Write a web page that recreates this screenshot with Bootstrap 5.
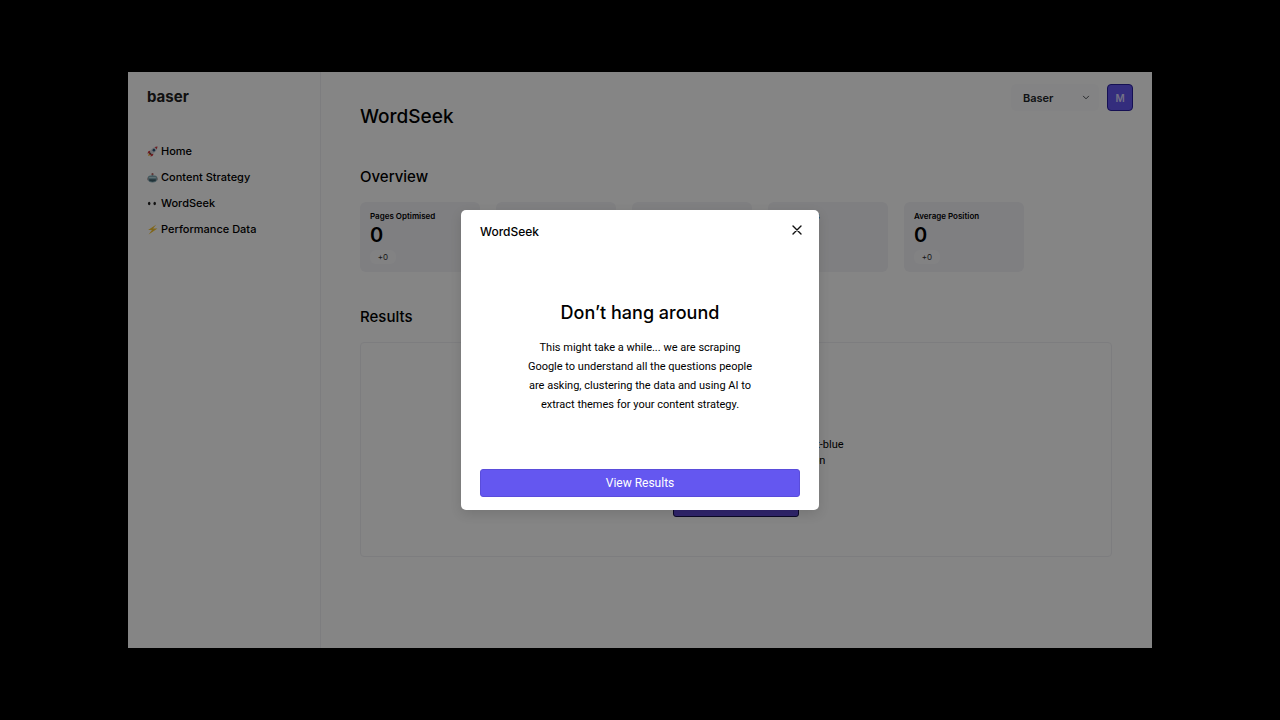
<!DOCTYPE html>
<html lang="en">
<head>
<meta charset="utf-8">
<meta name="viewport" content="width=device-width, initial-scale=1">
<title>WordSeek – baser</title>
<link href="https://cdn.jsdelivr.net/npm/bootstrap@5.3.0/dist/css/bootstrap.min.css" rel="stylesheet">
<style>
  body { background: #000; color: #000; font-family: Roboto, "Liberation Sans", sans-serif; font-size: 11px; line-height: 16px; padding: 10vh 10vw; }
  .app-frame { min-height: 80vh; background: #fff; }
  .grotesk { font-family: Inter, "Liberation Sans", sans-serif; font-weight: 600; }
  .sidebar { width: 193px; border-right: 1px solid #f0f0f4; padding: 15px 19px; }
  .brand { font-size: 15px; line-height: 20px; font-weight: 700; color: #222; }
  .side-links { margin-top: 31px; }
  .side-link { font-size: 11px; line-height: 26px; font-weight: 500; color: #000; gap: 3px; }
  .side-link svg { width: 11px; height: 11px; }
  .top-row { padding: 12px 19px 0 39px; }
  .page-title { font-size: 19px; line-height: 24px; font-weight: 500; margin: 21px 0 0; }
  .section-title { font-size: 15px; line-height: 24px; font-weight: 500; margin: 0; }
  .page-body { padding: 36px 40px 0 39px; }
  .workspace-select { width: 88px; height: 27px; border: 0; border-radius: 6px; background-color: #fbfbfd; background-size: 8px 7px; background-position: right 9px center; padding: 1px 20px 0 12px; font-size: 11px; }
  .avatar { width: 26px; height: 27px; border: 1px solid #2a20a0; border-radius: 4px; background: #6457f0; color: #dcd8ff; font-size: 10px; line-height: 16px; }
  .stats { gap: 16px; margin: 13px 0 33px; }
  .stat { width: 120px; height: 70px; border-radius: 6px; background: #f3f3f8; padding: 8px 10px; }
  .stat-label { font-size: 8px; line-height: 12px; }
  .stat-value { font-size: 20px; line-height: 26px; }
  .stat-delta { width: 26px; background: #fafafc; border-radius: 6px; font-family: Inter, sans-serif; font-size: 8px; line-height: 14px; color: #333; margin-top: 2px; }
  .results { margin: 13px 0 40px; height: 215px; border: 1px solid #f0f0f4; border-radius: 4px; padding-bottom: 39px; }
  .results-btn { width: 126px; height: 28px; font-size: 11px; border: 1px solid #16104a; border-radius: 3px; background: #5c48d0; color: #fff; margin-top: 20px; padding: 0; }
  .scrim { background: rgba(0, 0, 0, .48); }
  .dialog { width: 358px; background: #fff; border-radius: 5px; padding: 12px 19px 13px; box-shadow: 0 4px 12px rgba(0, 0, 0, .12); }
  .dialog-name { font-size: 12px; line-height: 20px; font-weight: 500; }
  .close-x { width: 16px; height: 16px; margin-right: -3px; }
  .dialog-title { font-size: 18px; line-height: 24px; font-weight: 500; margin: 59px 0 13px; }
  .dialog-text { font-size: 11px; line-height: 19px; width: 232px; margin: 0 auto 55px; }
  .view-btn { height: 28px; font-size: 12px; line-height: 16px; border: 1px solid #5a4ddb; border-radius: 3px; background: #6457f0; color: #fff; }
</style>
</head>
<body>
<div class="app-frame d-flex position-relative overflow-hidden">
  <aside class="sidebar flex-shrink-0">
    <div class="brand grotesk">baser</div>
    <nav class="side-links d-flex flex-column">
      <a href="#" class="side-link grotesk d-flex align-items-center text-decoration-none">
        <svg viewBox="0 0 20 20" aria-hidden="true"><path d="M2 18l2-6 4 4z" fill="#f7a325"/><path d="M6 8l-4 2-1 4 5-2zM12 14l-2 4-4 1 2-5z" fill="#d6303a"/><path d="M5 11C8 5 13 1 19 1c0 6-4 11-10 14z" fill="#cfd6dd"/><path d="M14 2l5-1-1 5z" fill="#d6303a"/><circle cx="12.500" cy="7.500" r="2.300" fill="#31547a"/><path d="M5 11l4 4-3 1-2-2z" fill="#6b3038"/></svg>Home</a>
      <a href="#" class="side-link grotesk d-flex align-items-center text-decoration-none">
        <svg viewBox="0 0 20 20" aria-hidden="true"><path d="M9 3h2v5H9z" fill="#9dbcc5"/><circle cx="10" cy="4" r="2" fill="#b56a68"/><path d="M1 10h2v5H1zM17 10h2v5h-2z" fill="#8b6664"/><path d="M2 9q0-3 8-3t8 3v4q0 6-8 6t-8-6z" fill="#81a8b3"/><path d="M4 9h12v2H4z" fill="#b9d6dd"/><path d="M4 13h12v3q-6 3-12 0z" fill="#3f606c"/></svg>Content Strategy</a>
      <a href="#" class="side-link grotesk d-flex align-items-center text-decoration-none">
        <svg viewBox="0 0 20 20" aria-hidden="true"><ellipse cx="5" cy="10" rx="4.500" ry="6" fill="#fff"/><ellipse cx="15" cy="10" rx="4.500" ry="6" fill="#fff"/><ellipse cx="4" cy="10" rx="2.300" ry="3" fill="#222"/><ellipse cx="14" cy="10" rx="2.300" ry="3" fill="#222"/></svg>WordSeek</a>
      <a href="#" class="side-link grotesk d-flex align-items-center text-decoration-none">
        <svg viewBox="0 0 20 20" aria-hidden="true"><path d="M17 1L2 11h7l-6 8L19 8h-8z" fill="#f5c331"/></svg>Performance Data</a>
    </nav>
  </aside>
  <main class="flex-grow-1">
    <div class="top-row d-flex justify-content-between align-items-start">
      <h1 class="page-title grotesk">WordSeek</h1>
      <div class="d-flex align-items-center gap-2">
        <select class="form-select workspace-select grotesk" aria-label="Workspace"><option>Baser</option></select>
        <button type="button" class="btn avatar grotesk p-0">M</button>
      </div>
    </div>
    <div class="page-body">
      <h2 class="section-title grotesk">Overview</h2>
      <div class="stats d-flex">
        <div class="stat"><div class="stat-label grotesk">Pages Optimised</div><div class="stat-value grotesk">0</div><div class="stat-delta text-center">+0</div></div>
        <div class="stat"></div>
        <div class="stat"></div>
        <div class="stat"><div class="stat-label grotesk">Total Links</div></div>
        <div class="stat"><div class="stat-label grotesk">Average Position</div><div class="stat-value grotesk">0</div><div class="stat-delta text-center">+0</div></div>
      </div>
      <h2 class="section-title grotesk">Results</h2>
      <div class="results d-flex flex-column align-items-center justify-content-end text-center">
        <div>There are no results. Click on this violet-blue<br>button below to start a new question</div>
        <button type="button" class="btn results-btn">New Search</button>
      </div>
    </div>
  </main>
  <div class="scrim position-absolute top-0 start-0 w-100 h-100 d-flex align-items-center justify-content-center">
    <div class="dialog" role="dialog" aria-labelledby="dialog-title">
      <div class="d-flex justify-content-between align-items-start">
        <span class="dialog-name grotesk">WordSeek</span>
        <button type="button" class="btn border-0 p-0 close-x d-flex align-items-center justify-content-end" aria-label="Close">
          <svg width="12" height="12" viewBox="0 0 12 12" fill="none" stroke="#111" stroke-width="1.400" stroke-linecap="round"><path d="M2 2l8 8M10 2l-8 8"/></svg>
        </button>
      </div>
      <h2 class="dialog-title grotesk text-center" id="dialog-title">Don’t hang around</h2>
      <p class="dialog-text text-center">This might take a while... we are scraping Google to understand all the questions people are asking, clustering the data and using AI to extract themes for your content strategy.</p>
      <button type="button" class="btn view-btn w-100 p-0">View Results</button>
    </div>
  </div>
</div>
<script src="https://cdn.jsdelivr.net/npm/bootstrap@5.3.0/dist/js/bootstrap.bundle.min.js"></script>
</body>
</html>
